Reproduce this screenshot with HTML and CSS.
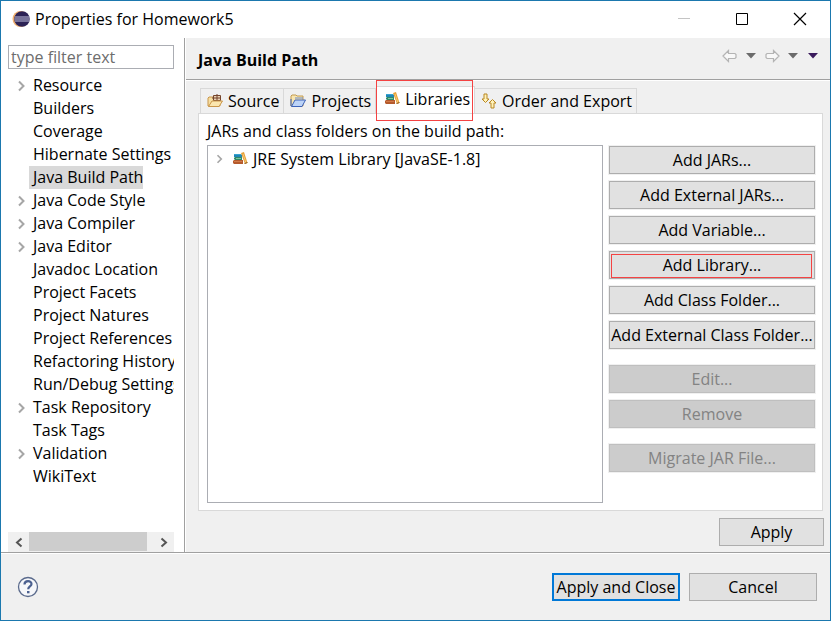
FILE: index.html
```html
<!DOCTYPE html>
<html lang="en">
<head>
<meta charset="utf-8">
<title>Properties for Homework5</title>
<link rel="stylesheet" href="styles.css">
</head>
<body>
<svg class="defs" aria-hidden="true">
  <symbol id="chevron" viewBox="0 0 8 12"><path d="M1 1.500L5.500 6L1 10.500" fill="none" stroke="#a6a6a6" stroke-width="2"/></symbol>
  <symbol id="books" viewBox="0 0 16 16">
    <path d="M2 3h7l1 1v2H2z" fill="#1f86b8"/><path d="M2 3h7v1H2z" fill="#35a4d0"/>
    <path d="M3 6h7v3H3l-1-1V7z" fill="#2f8a68"/><path d="M4 7h5v1H4z" fill="#7cc4a0"/>
    <path d="M2 9h9v4H2l-1-1v-2z" fill="#b55a2c"/><path d="M2 10h8v1H2z" fill="#d07a48"/>
    <path d="M9 2l3-1l3.500 11l-2.500 1z" fill="#e8a33a"/><path d="M11 3l3 9" stroke="#f6c878" fill="none"/><path d="M12.500 12.500l3-1" stroke="#8c5a1c" fill="none"/>
  </symbol>
</svg>
<div class="window">
  <header class="titlebar">
    <svg class="logo" viewBox="0 0 18 18"><circle cx="8.500" cy="9" r="8" fill="#f0b070"/><circle cx="10" cy="9" r="7.800" fill="#2c2255"/><path d="M3 7h14.500M2.500 9h15M3 11h14.500" stroke="#c4c4e0" stroke-width="1.200"/></svg>
    <h1 class="title">Properties for Homework5</h1>
    <div class="captions">
      <button class="caption" aria-label="Minimize" disabled><svg viewBox="0 0 14 14"><path d="M1 6.500h12" stroke="#c4c4c4"/></svg></button>
      <button class="caption" aria-label="Maximize"><svg viewBox="0 0 14 14"><path d="M1.500 1.500h11v11h-11z" fill="none" stroke="#000"/></svg></button>
      <button class="caption" aria-label="Close"><svg viewBox="0 0 14 14"><path d="M1 1l12 12M13 1L1 13" stroke="#000" stroke-width="1.200"/></svg></button>
    </div>
  </header>
  <div class="body">
    <nav class="sidebar">
      <input class="filter" type="text" placeholder="type filter text" aria-label="Filter">
      <ul class="tree">
        <li><svg class="chevron"><use href="#chevron"/></svg><span>Resource</span></li>
        <li><span>Builders</span></li>
        <li><span>Coverage</span></li>
        <li><span>Hibernate Settings</span></li>
        <li><span class="selected">Java Build Path</span></li>
        <li><svg class="chevron"><use href="#chevron"/></svg><span>Java Code Style</span></li>
        <li><svg class="chevron"><use href="#chevron"/></svg><span>Java Compiler</span></li>
        <li><svg class="chevron"><use href="#chevron"/></svg><span>Java Editor</span></li>
        <li><span>Javadoc Location</span></li>
        <li><span>Project Facets</span></li>
        <li><span>Project Natures</span></li>
        <li><span>Project References</span></li>
        <li><span>Refactoring History</span></li>
        <li><span>Run/Debug Settings</span></li>
        <li><svg class="chevron"><use href="#chevron"/></svg><span>Task Repository</span></li>
        <li><span>Task Tags</span></li>
        <li><svg class="chevron"><use href="#chevron"/></svg><span>Validation</span></li>
        <li><span>WikiText</span></li>
      </ul>
      <div class="scrollbar">
        <button class="scroll-end" aria-label="Scroll left"><svg viewBox="0 0 8 10"><path d="M6.500 1L2 5l4.500 4" fill="none" stroke="#555" stroke-width="2"/></svg></button>
        <div class="track"><div class="thumb"></div></div>
        <button class="scroll-end" aria-label="Scroll right"><svg viewBox="0 0 8 10"><path d="M1.500 1L6 5L1.500 9" fill="none" stroke="#555" stroke-width="2"/></svg></button>
      </div>
    </nav>
    <main class="page">
      <div class="page-head">
        <h2>Java Build Path</h2>
        <div class="history">
          <button aria-label="Back"><svg width="16" height="14" viewBox="0 0 16 14"><path d="M1 7l5.500-5.500v3H13l1 1v3l-1 1H6.500v3z" fill="#f8f8f8" stroke="#b4b4b4" stroke-width="1.200"/></svg></button>
          <button aria-label="Back history"><svg width="10" height="6" viewBox="0 0 10 6"><path d="M0 0h10L5 5.500z" fill="#6b6b6b"/></svg></button>
          <button aria-label="Forward"><svg width="16" height="14" viewBox="0 0 16 14"><path d="M15 7L9.500 1.500v3H3l-1 1v3l1 1h6.500v3z" fill="#f8f8f8" stroke="#b4b4b4" stroke-width="1.200"/></svg></button>
          <button aria-label="Forward history"><svg width="10" height="6" viewBox="0 0 10 6"><path d="M0 0h10L5 5.500z" fill="#6b6b6b"/></svg></button>
          <button aria-label="Menu"><svg width="10" height="6" viewBox="0 0 10 6"><path d="M0 0h10L5 5.500z" fill="#3a1a5c"/></svg></button>
        </div>
      </div>
      <div class="tabs" role="tablist">
        <button class="tab" role="tab"><svg class="icon" viewBox="0 0 16 16"><path d="M1 13V5l1-1h4l1 1h6v8z" fill="#f6dfa2" stroke="#c9964a"/><path d="M6.500 2.500h7v5h-7zM10 1v7M5 5h9" fill="#ead1b4" stroke="#75452c"/><path d="M1.500 13.500L5 8h10.500L12 13.500z" fill="#fbe6ae" stroke="#c9964a"/></svg>Source</button>
        <button class="tab" role="tab"><svg class="icon" viewBox="0 0 16 16"><path d="M1 13V3l1-1h4l1 1h6v10z" fill="#f9e6b0" stroke="#c29a50"/><path d="M1 13V6" stroke="#3c62b8"/><path d="M1.500 13.500L5 7h10.500L12 13.500z" fill="#bcd3f7" stroke="#3c62b8"/><path d="M5 5h8" stroke="#6888c8"/></svg>Projects</button>
        <button class="tab active" role="tab" aria-selected="true"><svg class="icon"><use href="#books"/></svg>Libraries<span class="highlight"></span></button>
        <button class="tab" role="tab"><svg class="icon" viewBox="0 0 16 16"><path d="M3 1h3v5h2L4.500 9.500L1 6h2zM10 15h3v-5h2l-3.500-3.500L8 10h2z" fill="#fff2b8" stroke="#b98722"/></svg>Order and Export</button>
      </div>
      <section class="panel" role="tabpanel">
        <p class="label" id="list-label">JARs and class folders on the build path:</p>
        <div class="columns">
          <ul class="entries" aria-labelledby="list-label">
            <li><svg class="chevron small"><use href="#chevron"/></svg><svg class="icon"><use href="#books"/></svg>JRE System Library [JavaSE-1.8]</li>
          </ul>
          <div class="actions">
            <div class="group">
              <button class="btn">Add JARs...</button>
              <button class="btn">Add External JARs...</button>
              <button class="btn">Add Variable...</button>
              <button class="btn">Add Library...<span class="highlight"></span></button>
              <button class="btn">Add Class Folder...</button>
              <button class="btn">Add External Class Folder...</button>
            </div>
            <div class="group">
              <button class="btn" disabled>Edit...</button>
              <button class="btn" disabled>Remove</button>
            </div>
            <div class="group">
              <button class="btn" disabled>Migrate JAR File...</button>
            </div>
          </div>
        </div>
      </section>
      <div class="apply-row"><button class="btn apply">Apply</button></div>
    </main>
  </div>
  <footer class="footer">
    <button class="help" aria-label="Help"><svg viewBox="0 0 22 22"><circle cx="11" cy="11" r="9.500" fill="#f6f7fa" stroke="#5a6a8c" stroke-width="1.300"/><path d="M7.500 8.500C7.500 4 14.500 4 14.500 8c0 2.500-3.300 2.500-3.300 5.200" fill="none" stroke="#4c6190" stroke-width="2.200"/><path d="M10 15h2.500v2.300H10z" fill="#4c6190"/></svg></button>
    <button class="btn wide default">Apply and Close</button>
    <button class="btn wide">Cancel</button>
  </footer>
</div>
</body>
</html>
```
FILE: styles.css
```css
* { box-sizing: border-box; }
body {
  margin: 0;
  font: 16px/22px "Open Sans", "Noto Sans", sans-serif;
  color: #000;
}
button, input { font: inherit; color: inherit; }
button { padding: 0; border: 0; background: none; white-space: nowrap; }
ul { list-style: none; margin: 0; padding: 0; }
svg { flex: none; }
.defs { position: absolute; width: 0; height: 0; }

.window {
  display: flex;
  flex-direction: column;
  min-height: 100vh;
  border: 1px solid #1b78ae;
  background: #f0f0f0;
}
.titlebar {
  display: flex;
  align-items: center;
  height: 37px;
  padding: 0 0 2px 11px;
  background: #fff;
}
.logo { width: 18px; height: 18px; margin-right: 5px; }
.title { flex: 1; margin: 0; font-size: 16px; font-weight: 400; }
.captions { display: flex; padding-right: 1px; }
.caption { display: grid; place-items: center; width: 58px; height: 35px; }
.caption svg { width: 14px; height: 14px; }

.body { flex: 1; display: flex; border-bottom: 1px solid #a0a0a0; }
.sidebar {
  display: flex;
  flex-direction: column;
  flex: none;
  width: 184px;
  padding: 7px 10px 0 7px;
  border-right: 1px solid #a0a0a0;
  background: #fff;
}
.filter {
  width: 100%;
  height: 24px;
  padding: 0 2px;
  border: 1px solid #abadb3;
  background: #fff;
}
.filter::placeholder { color: #6d6d6d; opacity: 1; }
.tree { flex: 1; margin-top: 5px; overflow: hidden; }
.tree li {
  display: flex;
  justify-content: flex-end;
  align-items: center;
  height: 23px;
  line-height: 23px;
  white-space: nowrap;
}
.tree span { flex: none; width: calc(100% - 21px); padding: 0 4px; }
.tree .selected { width: auto; margin-right: auto; margin-left: 21px; padding-right: 0; background: #d9d9d9; }
.chevron { width: 8px; height: 12px; margin-right: 3px; }
.scrollbar { display: flex; height: 20px; background: #f0f0f0; }
.scroll-end { display: grid; place-items: center; width: 21px; }
.scroll-end svg { width: 8px; height: 11px; }
.track { flex: 1; }
.thumb { width: 95%; height: 19px; background: #cdcdcd; }

.page { flex: 1; display: flex; flex-direction: column; min-width: 0; border-left: 1px solid #fff; }
.page-head {
  display: flex;
  align-items: center;
  justify-content: space-between;
  height: 43px;
  padding: 2px 12px 0;
  border-bottom: 1px solid #fff;
  box-shadow: inset 0 -1px #a0a0a0;
}
.page-head h2 { margin: 0; font-size: 16px; font-weight: 700; }
.history { display: flex; align-items: center; gap: 8px; padding-bottom: 8px; }
.history button { display: flex; }
.history button:last-child { margin-left: 2px; }

.tabs { display: flex; align-items: flex-end; height: 32px; padding-left: 14px; }
.tab {
  display: flex;
  align-items: center;
  gap: 5px;
  height: 25px;
  padding: 0 4px 0 6px;
  border: 1px solid #d9d9d9;
  border-width: 1px 1px 0 0;
}
.tab:first-child { border-left-width: 1px; }
.tab.active { position: relative; height: 27px; padding: 0 4px 2px 8px; background: #fff; }
.icon { width: 16px; height: 16px; }
.highlight { position: absolute; border: 1px solid #f44343; pointer-events: none; }
.tab .highlight { inset: -7px 1px -8px 0; }
.panel {
  flex: 1;
  display: flex;
  flex-direction: column;
  margin: 0 7px 0 12px;
  padding: 6px 7px 7px 8px;
  border: 1px solid #d9d9d9;
  background: #fff;
}
.label { margin: 0 0 3px; }
.columns { flex: 1; display: flex; gap: 6px; }
.entries { flex: 1; padding: 1px 8px; border: 1px solid #abadb3; }
.entries li { display: flex; align-items: center; height: 23px; gap: 5px; }
.chevron.small { height: 10px; }
.actions { display: flex; flex-direction: column; gap: 16px; width: 206px; padding-top: 1px; }
.group { display: flex; flex-direction: column; gap: 7px; }
.btn {
  position: relative;
  height: 28px;
  border: 1px solid #adadad;
  background: #e1e1e1;
  box-shadow: 0 0 0 1px #f0f0f0;
}
.btn:disabled { border-color: #bfbfbf; background: #ccc; color: #838383; }
.btn .highlight { inset: 2px 2px 0 1px; }
.apply-row { display: flex; justify-content: flex-end; padding: 7px 6px 6px; }
.apply { width: 105px; }

.footer {
  display: flex;
  align-items: center;
  gap: 9px;
  height: 67px;
  padding: 0 13px 0 16px;
  border-top: 1px solid #fff;
}
.help { display: flex; margin-right: auto; }
.help svg { width: 22px; height: 22px; }
.wide { width: 128px; }
.default { border: 2px solid #0078d7; }
```
